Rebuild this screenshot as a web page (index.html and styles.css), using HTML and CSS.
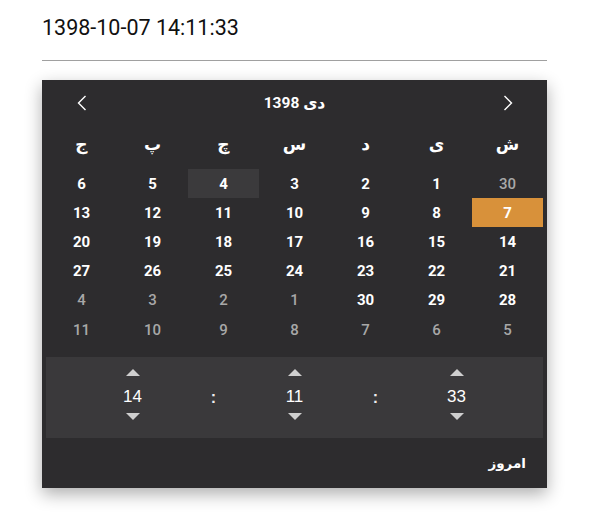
FILE: index.html
```html
<!DOCTYPE html>
<html lang="fa">
<head>
    <meta charset="UTF-8">
    <meta name="viewport" content="width=device-width, initial-scale=1.0">
    <title>Date Picker</title>
    <link rel="stylesheet" href="styles.css">
</head>
<body>
    <div class="picker-wrap">
        <div class="field">
            <span class="field-value" dir="ltr">1398-10-07 14:11:33</span>
        </div>

        <div class="panel" dir="rtl">
            <div class="panel-head">
                <button class="nav-btn">
                    <svg width="10" height="16" viewBox="0 0 10 16"><path d="M1.5 1 L8.5 8 L1.5 15" fill="none" stroke="#fff" stroke-width="1.4"/></svg>
                </button>
                <div class="month-title">دی 1398</div>
                <button class="nav-btn">
                    <svg width="10" height="16" viewBox="0 0 10 16"><path d="M8.5 1 L1.5 8 L8.5 15" fill="none" stroke="#fff" stroke-width="1.4"/></svg>
                </button>
            </div>

            <div class="week-row">
                <div>ش</div><div>ی</div><div>د</div><div>س</div><div>چ</div><div>پ</div><div>ج</div>
            </div>

            <div class="days" id="days"></div>

            <div class="time" dir="ltr">
                <div class="spin">
                    <span class="up"></span>
                    <span class="num">14</span>
                    <span class="down"></span>
                </div>
                <div class="sep">:</div>
                <div class="spin">
                    <span class="up"></span>
                    <span class="num">11</span>
                    <span class="down"></span>
                </div>
                <div class="sep">:</div>
                <div class="spin">
                    <span class="up"></span>
                    <span class="num">33</span>
                    <span class="down"></span>
                </div>
            </div>

            <div class="panel-foot">
                <button class="today-btn">امروز</button>
            </div>
        </div>
    </div>

    <script>
        // 6 weeks, starting saturday (rtl so first cell sits on the right)
        const cells = [
            [30, 'other'], 1, 2, 3, [4, 'today'], 5, 6,
            [7, 'selected'], 8, 9, 10, 11, 12, 13,
            14, 15, 16, 17, 18, 19, 20,
            21, 22, 23, 24, 25, 26, 27,
            28, 29, 30, [1, 'other'], [2, 'other'], [3, 'other'], [4, 'other'],
            [5, 'other'], [6, 'other'], [7, 'other'], [8, 'other'], [9, 'other'], [10, 'other'], [11, 'other']
        ];
        const daysEl = document.getElementById("days");
        cells.forEach(c => {
            const d = document.createElement("div");
            d.className = "day";
            if (Array.isArray(c)) {
                d.textContent = c[0];
                d.classList.add(c[1]);
            } else {
                d.textContent = c;
            }
            daysEl.appendChild(d);
        });
    </script>
</body>
</html>
```

FILE: styles.css
```css
body {
    margin: 0;
    background: #fff;
    font-family: Roboto, "DejaVu Sans", sans-serif;
}
.picker-wrap {
    width: 505px;
    margin-left: 42px;
    padding-top: 16px;
    padding-bottom: 24px;
}
.field {
    padding-bottom: 20px;
    border-bottom: 1px solid #a0a0a0;
}
.field-value {
    display: block;
    font-size: 21.5px;
    line-height: 24px;
    color: #111;
}
.panel {
    margin-top: 19px;
    background: #2d2c2e;
    box-shadow: 0 6px 16px rgba(0, 0, 0, 0.32);
    padding: 0 4px;
    color: #fff;
}
.panel-head {
    display: grid;
    grid-template-columns: 71px 1fr 71px;
    align-items: center;
    height: 46px;
}
.nav-btn {
    background: none;
    border: 0;
    padding: 0;
    height: 46px;
    display: flex;
    align-items: center;
    justify-content: center;
    cursor: pointer;
}
.month-title {
    text-align: center;
    font-size: 15.5px;
    font-weight: bold;
    font-family: Roboto, "DejaVu Sans", sans-serif;
}
.week-row {
    display: grid;
    grid-template-columns: repeat(7, 71px);
    height: 36px;
    align-items: center;
    text-align: center;
    font-family: "DejaVu Sans", sans-serif;
    font-weight: bold;
    font-size: 17px;
}
.days {
    display: grid;
    grid-template-columns: repeat(7, 71px);
    grid-auto-rows: 29.2px;
    margin-top: 7px;
}
.day {
    display: flex;
    align-items: center;
    justify-content: center;
    font-size: 15px;
    font-weight: bold;
    color: #fff;
}
.day.other {
    color: #a8a8a8;
    font-weight: 500;
}
.day.today {
    background: #3b3a3c;
}
.day.selected {
    background: #d8913a;
}
.time {
    margin-top: 13px;
    height: 81px;
    box-sizing: border-box;
    padding-top: 12px;
    background: #3a393b;
    display: grid;
    grid-template-columns: repeat(5, 81px);
    justify-content: center;
    align-items: start;
    font-family: "Liberation Sans", Arial, sans-serif;
}
.spin {
    display: flex;
    flex-direction: column;
    align-items: center;
}
.up,
.down {
    width: 0;
    height: 0;
    border-left: 7.5px solid transparent;
    border-right: 7.5px solid transparent;
}
.up {
    border-bottom: 7px solid #cfcfcf;
    margin-bottom: 11px;
}
.down {
    border-top: 7px solid #cfcfcf;
    margin-top: 6px;
}
.num {
    font-size: 17px;
    line-height: 20px;
    color: #fff;
}
.sep {
    align-self: center;
    margin-top: -12px;
    text-align: center;
    font-size: 16px;
    font-weight: bold;
    color: #eee;
}
.panel-foot {
    height: 50px;
    display: flex;
    align-items: center;
    padding-right: 17px;
}
.today-btn {
    background: none;
    border: 0;
    color: #fff;
    font-family: "DejaVu Sans", sans-serif;
    font-weight: bold;
    font-size: 13.5px;
    padding: 0;
    cursor: pointer;
}
```
